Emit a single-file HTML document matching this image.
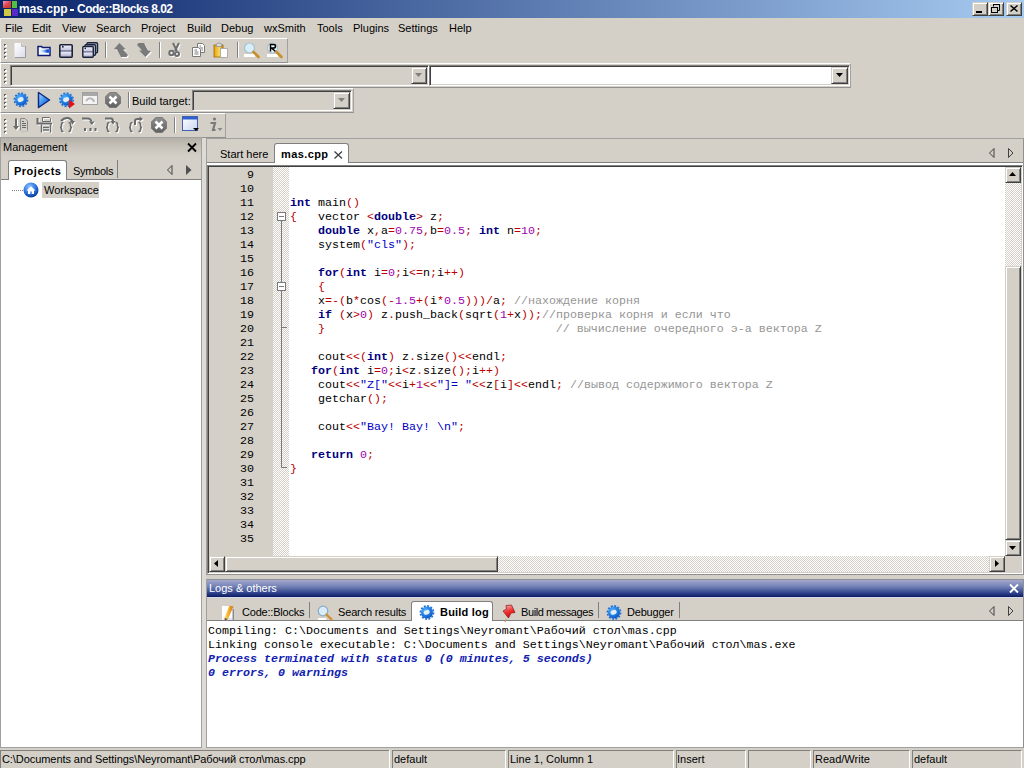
<!DOCTYPE html>
<html><head><meta charset="utf-8">
<style>
*{box-sizing:border-box;margin:0;padding:0}
html,body{width:1024px;height:768px;overflow:hidden;background:#D4D0C8;font-family:"Liberation Sans",sans-serif;font-size:11px;color:#000}
.a{position:absolute}
.t{position:absolute;white-space:pre;line-height:13px}
.mono{font-family:"Liberation Mono",monospace;font-size:11.66px;white-space:pre;position:absolute;line-height:14px}
.btn{position:absolute;background:#D4D0C8;border-top:1px solid #D4D0C8;border-left:1px solid #D4D0C8;border-right:1px solid #404040;border-bottom:1px solid #404040;box-shadow:inset 1px 1px 0 #fff,inset -1px -1px 0 #808080}
.sunk{position:absolute;border-top:1px solid #808080;border-left:1px solid #808080;border-right:1px solid #fff;border-bottom:1px solid #fff;box-shadow:inset 1px 1px 0 #404040, inset -1px -1px 0 #D4D0C8}
.tb{position:absolute;height:25px;border-top:1px solid #fff;border-left:1px solid #fff;border-bottom:1px solid #909090;border-right:1px solid #A0A0A0}
.sep{position:absolute;width:2px;border-left:1px solid #808080;border-right:1px solid #fff}
.checker{background-color:#fff;background-image:linear-gradient(45deg,#D4D0C8 25%,transparent 25%,transparent 75%,#D4D0C8 75%),linear-gradient(45deg,#D4D0C8 25%,transparent 25%,transparent 75%,#D4D0C8 75%);background-size:2px 2px;background-position:0 0,1px 1px}
.k{color:#00007F;font-weight:bold}
.o{color:#B80000}
.n{color:#A000B0}
.s{color:#0000C8}
.c{color:#959595}
svg{position:absolute;overflow:visible}
</style></head><body>

<div class="a" style="left:0px;top:0px;width:1024px;height:18px;background:linear-gradient(to right,#0A246A,#A6CAF0)"></div>
<svg style="left:0;top:0" width="20" height="17">
 <defs><linearGradient id="rdg" x1="0" y1="0" x2="1" y2="1"><stop offset="0" stop-color="#F0A0B0"/><stop offset="0.5" stop-color="#E04050"/><stop offset="1" stop-color="#C04010"/></linearGradient></defs>
 <rect x="3" y="1" width="8" height="7" fill="url(#rdg)"/>
 <rect x="12" y="1" width="5" height="7" fill="#50C040"/>
 <rect x="4" y="9" width="7" height="7" fill="#D0C840"/>
 <rect x="12" y="9" width="6" height="7" fill="#5828C8"/>
</svg>
<div class="btn" style="left:972px;top:2px;width:16px;height:14px"></div>
<div class="a" style="left:976px;top:11px;width:6px;height:2px;background:#000"></div>
<div class="btn" style="left:988px;top:2px;width:16px;height:14px"></div>
<svg style="left:991px;top:4px" width="9" height="9"><path d="M2.5 2.5V0.5H8.5V6.5H6.5" fill="none" stroke="#000" stroke-width="1"/><path d="M2 0H9V1H2z" fill="#000"/><rect x="0.5" y="3.5" width="6" height="5" fill="none" stroke="#000"/><path d="M0 3H7V4H0z" fill="#000"/></svg>
<div class="btn" style="left:1006px;top:2px;width:16px;height:14px"></div>
<svg style="left:1010px;top:5px" width="8" height="7"><path d="M0.5 0.5L7.5 6.5M7.5 0.5L0.5 6.5" stroke="#000" stroke-width="1.5"/></svg>

<div class="t" style="left:19px;top:2px;color:#fff;font-weight:bold;font-size:12px;line-height:15px">mas.cpp</div>
<div class="a" style="left:70px;top:9px;width:4px;height:2px;background:#fff"></div>
<div class="t" style="left:77px;top:2px;color:#fff;font-weight:bold;font-size:12px;letter-spacing:-0.5px;line-height:15px">Code::Blocks 8.02</div>
<div class="t" style="left:5px;top:22px;">File</div>
<div class="t" style="left:32px;top:22px;">Edit</div>
<div class="t" style="left:62px;top:22px;">View</div>
<div class="t" style="left:96px;top:22px;">Search</div>
<div class="t" style="left:141px;top:22px;">Project</div>
<div class="t" style="left:187px;top:22px;">Build</div>
<div class="t" style="left:221px;top:22px;">Debug</div>
<div class="t" style="left:264px;top:22px;">wxSmith</div>
<div class="t" style="left:317px;top:22px;">Tools</div>
<div class="t" style="left:353px;top:22px;">Plugins</div>
<div class="t" style="left:398px;top:22px;">Settings</div>
<div class="t" style="left:449px;top:22px;">Help</div>
<div class="tb" style="left:0;top:38px;width:288px"></div>
<div class="a" style="left:4px;top:44px;width:2px;height:2px;background:#606060"></div>
<div class="a" style="left:5px;top:45px;width:2px;height:2px;background:#fff"></div>
<div class="a" style="left:4px;top:44px;width:2px;height:1px;background:#606060"></div>
<div class="a" style="left:4px;top:45px;width:1px;height:1px;background:#606060"></div>
<div class="a" style="left:4px;top:48px;width:2px;height:2px;background:#606060"></div>
<div class="a" style="left:5px;top:49px;width:2px;height:2px;background:#fff"></div>
<div class="a" style="left:4px;top:48px;width:2px;height:1px;background:#606060"></div>
<div class="a" style="left:4px;top:49px;width:1px;height:1px;background:#606060"></div>
<div class="a" style="left:4px;top:52px;width:2px;height:2px;background:#606060"></div>
<div class="a" style="left:5px;top:53px;width:2px;height:2px;background:#fff"></div>
<div class="a" style="left:4px;top:52px;width:2px;height:1px;background:#606060"></div>
<div class="a" style="left:4px;top:53px;width:1px;height:1px;background:#606060"></div>
<div class="a" style="left:4px;top:56px;width:2px;height:2px;background:#606060"></div>
<div class="a" style="left:5px;top:57px;width:2px;height:2px;background:#fff"></div>
<div class="a" style="left:4px;top:56px;width:2px;height:1px;background:#606060"></div>
<div class="a" style="left:4px;top:57px;width:1px;height:1px;background:#606060"></div>
<div class="tb" style="left:0;top:63px;width:851px"></div>
<div class="a" style="left:4px;top:69px;width:2px;height:2px;background:#606060"></div>
<div class="a" style="left:5px;top:70px;width:2px;height:2px;background:#fff"></div>
<div class="a" style="left:4px;top:69px;width:2px;height:1px;background:#606060"></div>
<div class="a" style="left:4px;top:70px;width:1px;height:1px;background:#606060"></div>
<div class="a" style="left:4px;top:73px;width:2px;height:2px;background:#606060"></div>
<div class="a" style="left:5px;top:74px;width:2px;height:2px;background:#fff"></div>
<div class="a" style="left:4px;top:73px;width:2px;height:1px;background:#606060"></div>
<div class="a" style="left:4px;top:74px;width:1px;height:1px;background:#606060"></div>
<div class="a" style="left:4px;top:77px;width:2px;height:2px;background:#606060"></div>
<div class="a" style="left:5px;top:78px;width:2px;height:2px;background:#fff"></div>
<div class="a" style="left:4px;top:77px;width:2px;height:1px;background:#606060"></div>
<div class="a" style="left:4px;top:78px;width:1px;height:1px;background:#606060"></div>
<div class="a" style="left:4px;top:81px;width:2px;height:2px;background:#606060"></div>
<div class="a" style="left:5px;top:82px;width:2px;height:2px;background:#fff"></div>
<div class="a" style="left:4px;top:81px;width:2px;height:1px;background:#606060"></div>
<div class="a" style="left:4px;top:82px;width:1px;height:1px;background:#606060"></div>
<div class="tb" style="left:0;top:88px;width:354px"></div>
<div class="a" style="left:4px;top:94px;width:2px;height:2px;background:#606060"></div>
<div class="a" style="left:5px;top:95px;width:2px;height:2px;background:#fff"></div>
<div class="a" style="left:4px;top:94px;width:2px;height:1px;background:#606060"></div>
<div class="a" style="left:4px;top:95px;width:1px;height:1px;background:#606060"></div>
<div class="a" style="left:4px;top:98px;width:2px;height:2px;background:#606060"></div>
<div class="a" style="left:5px;top:99px;width:2px;height:2px;background:#fff"></div>
<div class="a" style="left:4px;top:98px;width:2px;height:1px;background:#606060"></div>
<div class="a" style="left:4px;top:99px;width:1px;height:1px;background:#606060"></div>
<div class="a" style="left:4px;top:102px;width:2px;height:2px;background:#606060"></div>
<div class="a" style="left:5px;top:103px;width:2px;height:2px;background:#fff"></div>
<div class="a" style="left:4px;top:102px;width:2px;height:1px;background:#606060"></div>
<div class="a" style="left:4px;top:103px;width:1px;height:1px;background:#606060"></div>
<div class="a" style="left:4px;top:106px;width:2px;height:2px;background:#606060"></div>
<div class="a" style="left:5px;top:107px;width:2px;height:2px;background:#fff"></div>
<div class="a" style="left:4px;top:106px;width:2px;height:1px;background:#606060"></div>
<div class="a" style="left:4px;top:107px;width:1px;height:1px;background:#606060"></div>
<div class="tb" style="left:0;top:113px;width:226px"></div>
<div class="a" style="left:4px;top:119px;width:2px;height:2px;background:#606060"></div>
<div class="a" style="left:5px;top:120px;width:2px;height:2px;background:#fff"></div>
<div class="a" style="left:4px;top:119px;width:2px;height:1px;background:#606060"></div>
<div class="a" style="left:4px;top:120px;width:1px;height:1px;background:#606060"></div>
<div class="a" style="left:4px;top:123px;width:2px;height:2px;background:#606060"></div>
<div class="a" style="left:5px;top:124px;width:2px;height:2px;background:#fff"></div>
<div class="a" style="left:4px;top:123px;width:2px;height:1px;background:#606060"></div>
<div class="a" style="left:4px;top:124px;width:1px;height:1px;background:#606060"></div>
<div class="a" style="left:4px;top:127px;width:2px;height:2px;background:#606060"></div>
<div class="a" style="left:5px;top:128px;width:2px;height:2px;background:#fff"></div>
<div class="a" style="left:4px;top:127px;width:2px;height:1px;background:#606060"></div>
<div class="a" style="left:4px;top:128px;width:1px;height:1px;background:#606060"></div>
<div class="a" style="left:4px;top:131px;width:2px;height:2px;background:#606060"></div>
<div class="a" style="left:5px;top:132px;width:2px;height:2px;background:#fff"></div>
<div class="a" style="left:4px;top:131px;width:2px;height:1px;background:#606060"></div>
<div class="a" style="left:4px;top:132px;width:1px;height:1px;background:#606060"></div>
<!-- ===== Toolbar 1 icons ===== -->
<svg style="left:14px;top:42px" width="13" height="16">
 <defs><linearGradient id="pg" x1="0" y1="0" x2="1" y2="1"><stop offset="0" stop-color="#fff"/><stop offset="1" stop-color="#DCDCEC"/></linearGradient></defs>
 <path d="M0.5 1H8L11.5 4.5V15H0.5z" fill="url(#pg)"/>
 <path d="M11.5 4V15.5H1" fill="none" stroke="#9A9A9A" stroke-width="1"/>
 <path d="M7.5 1V4.5H11.5" fill="#C8C8C8" stroke="#B0B0B0" stroke-width="0.6"/>
</svg>
<svg style="left:37px;top:45px" width="15" height="12">
 <defs><linearGradient id="fg" x1="0" y1="0.5" x2="1" y2="0.5"><stop offset="0" stop-color="#FFFFFF"/><stop offset="0.35" stop-color="#B0D8F8"/><stop offset="0.75" stop-color="#1848D0"/><stop offset="1" stop-color="#3868E0"/></linearGradient></defs>
 <path d="M1 1.5H4.5L5.5 2.5H13V10.5H1z" fill="#F4F8FF" stroke="#101A70" stroke-width="1.5"/>
 <path d="M2 4.5Q7 5 13 4V8Q7 7.5 2 7z" fill="url(#fg)"/>
</svg>
<svg style="left:59px;top:44px" width="15" height="14">
 <defs><linearGradient id="flg" x1="0" y1="0" x2="0" y2="1"><stop offset="0" stop-color="#F4F4FF"/><stop offset="0.4" stop-color="#C8C8E0"/><stop offset="0.5" stop-color="#5A6080"/><stop offset="0.6" stop-color="#E8E8F8"/><stop offset="1" stop-color="#A8A8C8"/></linearGradient></defs>
 <rect x="0.8" y="0.8" width="12.4" height="12.4" rx="1" fill="url(#flg)" stroke="#1A2238" stroke-width="1.6"/>
 <rect x="3" y="2" width="1.6" height="1.6" fill="#1A2238"/>
</svg>
<svg style="left:82px;top:42px" width="17" height="16">
 <rect x="5" y="0.8" width="10.5" height="10" rx="1" fill="#B8BCD8" stroke="#1A2238" stroke-width="1.4"/>
 <rect x="3" y="2.8" width="10.5" height="10.5" rx="1" fill="#C8CCE4" stroke="#1A2238" stroke-width="1.4"/>
 <rect x="0.8" y="4.5" width="10.5" height="10.8" rx="1" fill="url(#flg)" stroke="#1A2238" stroke-width="1.4"/>
 <rect x="2.6" y="5.6" width="1.4" height="1.4" fill="#1A2238"/>
</svg>
<div class="sep" style="left:105px;top:42px;height:16px"></div>
<svg style="left:113px;top:42px" width="17" height="17">
 <path d="M6.5 1L1 7L4 7.5L8 15L13.5 15L15 13L10 7.5L13 7.5z" fill="#fff" transform="translate(1 1)"/>
 <path d="M6.5 1L1 7L4 7.5L8 15L13.5 15L15 13L10 7.5L13 7.5z" fill="#7A7A7A"/>
</svg>
<svg style="left:136px;top:42px" width="17" height="17">
 <path d="M9.5 15L15 9L12 8.5L8 1L2.5 1L1 3L6 8.5L3 8.5z" fill="#fff" transform="translate(1 1)"/>
 <path d="M9.5 15L15 9L12 8.5L8 1L2.5 1L1 3L6 8.5L3 8.5z" fill="#7A7A7A"/>
</svg>
<div class="sep" style="left:159px;top:42px;height:16px"></div>
<svg style="left:168px;top:42px" width="16" height="16">
 <g fill="none" stroke="#fff" stroke-width="2" transform="translate(1 1)">
  <path d="M5 1L9 9M11 1L7 9"/><circle cx="3.5" cy="11" r="2.2"/><circle cx="9" cy="12" r="2"/>
 </g>
 <g fill="none" stroke="#6E6E6E" stroke-width="2">
  <path d="M5 1L9 9M11 1L7 9"/><circle cx="3.5" cy="11" r="2.2"/><circle cx="9" cy="12" r="2"/>
 </g>
</svg>
<svg style="left:192px;top:43px" width="14" height="15">
 <path d="M5.5 0.5H10.5L12.5 2.5V9.5H5.5z" fill="#fff" stroke="#7A7A7A"/>
 <path d="M0.5 4.5H6.5L8.5 6.5V13.5H0.5z" fill="#fff" stroke="#7A7A7A"/>
 <path d="M2.5 7H5M2.5 9H6.5M2.5 11H6.5M7.5 3H9M7.5 5H11M9.5 7H11" stroke="#7A7A7A" stroke-width="1"/>
</svg>
<svg style="left:213px;top:42px" width="16" height="16">
 <defs><linearGradient id="cbg" x1="0" y1="0" x2="1" y2="0"><stop offset="0" stop-color="#E8A010"/><stop offset="0.6" stop-color="#F8D860"/><stop offset="1" stop-color="#C88000"/></linearGradient></defs>
 <rect x="1" y="3" width="9" height="12" fill="url(#cbg)" stroke="#A06800" stroke-width="0.8"/>
 <path d="M3 4.5Q3 0.8 6 0.8Q9 0.8 9 4.5z" fill="#D8D8D8" stroke="#909090" stroke-width="0.8"/>
 <path d="M7.5 6.5H14.5V15.5H7.5z" fill="#fff" stroke="#A0A0A0" stroke-width="0.8"/>
</svg>
<div class="sep" style="left:237px;top:42px;height:16px"></div>
<svg style="left:243px;top:42px" width="18" height="17">
 <path d="M1 12H12V15H1z" fill="#fff"/>
 <circle cx="6.5" cy="6" r="5" fill="#D8EEFA" stroke="#A8C0D0" stroke-width="1.2"/>
 <path d="M10.5 10L15.5 15" stroke="#C89028" stroke-width="2.6" stroke-linecap="round"/>
</svg>
<svg style="left:266px;top:42px" width="18" height="17">
 <path d="M1 12H12V15H1z" fill="#fff"/>
 <circle cx="6.5" cy="6" r="5" fill="#EEF6FC" stroke="#A8C0D0" stroke-width="1.2"/>
 <path d="M4.5 9.5V2.5H7.5Q9.5 2.5 9.5 4.2Q9.5 6 7.5 6H5.5L9.5 9.5" fill="none" stroke="#000" stroke-width="1.5"/>
 <path d="M10.5 10L15.5 15" stroke="#C89028" stroke-width="2.6" stroke-linecap="round"/>
</svg>

<!-- ===== Toolbar 3 icons ===== -->
<svg style="left:13px;top:92px" width="16" height="16">
 <g transform="translate(8 7.8)">
 <defs><radialGradient id="gg1" cx="0.35" cy="0.3" r="0.8"><stop offset="0" stop-color="#50B0FF"/><stop offset="0.6" stop-color="#1C78E0"/><stop offset="1" stop-color="#0C48B0"/></radialGradient></defs><circle cx="0" cy="0" r="6" fill="url(#gg1)"/><circle cx="0" cy="0" r="6.6" fill="none" stroke="#1C70D8" stroke-width="1.6" stroke-dasharray="2 1.45"/><ellipse cx="-0.3" cy="-0.3" rx="3.1" ry="2.3" fill="#E4ECF4" transform="rotate(-20)"/>
 </g>
</svg>
<svg style="left:37px;top:91px" width="15" height="18">
 <defs><linearGradient id="rg" x1="0" y1="0" x2="1" y2="1"><stop offset="0" stop-color="#B8E0FF"/><stop offset="0.5" stop-color="#3C90F0"/><stop offset="1" stop-color="#1060D0"/></linearGradient></defs>
 <path d="M1.5 1.5L12.5 9L1.5 16.5z" fill="url(#rg)" stroke="#0C2A80" stroke-width="1.5" stroke-linejoin="round"/>
</svg>
<svg style="left:59px;top:92px" width="17" height="17">
 <g transform="translate(7.5 7.8)">
 <defs><radialGradient id="gg2" cx="0.35" cy="0.3" r="0.8"><stop offset="0" stop-color="#50B0FF"/><stop offset="0.6" stop-color="#1C78E0"/><stop offset="1" stop-color="#0C48B0"/></radialGradient></defs><circle cx="0" cy="0" r="6" fill="url(#gg2)"/><circle cx="0" cy="0" r="6.6" fill="none" stroke="#1C70D8" stroke-width="1.6" stroke-dasharray="2 1.45"/><ellipse cx="-0.3" cy="-0.3" rx="3.1" ry="2.3" fill="#E4ECF4" transform="rotate(-20)"/>
 </g>
 <path d="M10 7.5L16 12L10 16.5z" fill="#E81010"/>
</svg>
<svg style="left:82px;top:92px" width="16" height="14">
 <rect x="0.5" y="0.5" width="15" height="12" fill="#F4F4F4" stroke="#A0A0A0"/>
 <rect x="1" y="1" width="14" height="3" fill="#A8A8A8"/>
 <path d="M4 9Q7 5 10 7Q12 8 12 10" fill="none" stroke="#B8B8B8" stroke-width="2"/>
</svg>
<svg style="left:105px;top:92px" width="16" height="16">
 <defs><linearGradient id="ag" x1="0" y1="0" x2="0" y2="1"><stop offset="0" stop-color="#909090"/><stop offset="1" stop-color="#606060"/></linearGradient></defs>
 <path d="M4.7 0.5H11.3L15.5 4.7V11.3L11.3 15.5H4.7L0.5 11.3V4.7z" fill="url(#ag)" stroke="#707070" stroke-width="0.8"/>
 <path d="M4.5 4.5L11.5 11.5M11.5 4.5L4.5 11.5" stroke="#fff" stroke-width="2.6"/>
</svg>
<div class="sep" style="left:128px;top:92px;height:16px"></div>

<!-- ===== Toolbar 4 icons (disabled) ===== -->
<svg style="left:13px;top:117px" width="18" height="17"><g transform="translate(1 1)"><path d="M3 1.5V10" fill="none" stroke="#fff" stroke-width="2"/><path d="M0 9H6L3 13z" fill="#fff"/></g><path d="M3 1.5V10" fill="none" stroke="#6A6A6A" stroke-width="2"/><path d="M0 9H6L3 13z" fill="#6A6A6A"/><path d="M7.5 13.5V1.5H12L14.5 4V13.5" fill="none" stroke="#8A8A8A"/><path d="M9 4.5H11M9 6.5H13M9 8.5H13M9 10.5H13" stroke="#6A6A6A"/><path d="M8 14.5H15" stroke="#C0C0C0"/></svg>
<svg style="left:36px;top:117px" width="18" height="17"><g transform="translate(1 1)"><path d="M1.5 1V6.5H16" fill="none" stroke="#fff" stroke-width="2"/><path d="M6.5 0.5H13.5L14.5 1.5V4.5H6.5z" fill="none" stroke="#fff" stroke-width="1"/><path d="M5.5 7.5V15.5M14.5 7.5V15.5M7 10.5H13M7 13H13" fill="none" stroke="#fff" stroke-width="1.4"/></g><path d="M1.5 1V6.5H16" fill="none" stroke="#6A6A6A" stroke-width="2"/><path d="M6.5 0.5H13.5L14.5 1.5V4.5H6.5z" fill="none" stroke="#6A6A6A" stroke-width="1"/><path d="M5.5 7.5V15.5M14.5 7.5V15.5M7 10.5H13M7 13H13" fill="none" stroke="#6A6A6A" stroke-width="1.4"/></svg>
<svg style="left:59px;top:117px" width="18" height="17"><g transform="translate(1 1)"><path d="M2 4Q5 0.5 9 1Q12 1.5 13.5 4.5" fill="none" stroke="#fff" stroke-width="2"/><path d="M11 4H16L13.5 7.5z" fill="#fff"/><path d="M4.5 5.5Q2.5 5.5 2.5 7.5V9Q2.5 10.5 1 10.5Q2.5 10.5 2.5 12V13Q2.5 14.5 4.5 14.5" fill="none" stroke="#fff" stroke-width="1.6"/><path d="M9.5 5.5Q11.5 5.5 11.5 7.5V9Q11.5 10.5 13 10.5Q11.5 10.5 11.5 12V13Q11.5 14.5 9.5 14.5" fill="none" stroke="#fff" stroke-width="1.6"/></g><path d="M2 4Q5 0.5 9 1Q12 1.5 13.5 4.5" fill="none" stroke="#6A6A6A" stroke-width="2"/><path d="M11 4H16L13.5 7.5z" fill="#6A6A6A"/><path d="M4.5 5.5Q2.5 5.5 2.5 7.5V9Q2.5 10.5 1 10.5Q2.5 10.5 2.5 12V13Q2.5 14.5 4.5 14.5" fill="none" stroke="#6A6A6A" stroke-width="1.6"/><path d="M9.5 5.5Q11.5 5.5 11.5 7.5V9Q11.5 10.5 13 10.5Q11.5 10.5 11.5 12V13Q11.5 14.5 9.5 14.5" fill="none" stroke="#6A6A6A" stroke-width="1.6"/></svg>
<svg style="left:82px;top:117px" width="18" height="17"><g transform="translate(1 1)"><path d="M0 1.5H6Q8.5 1.5 9.5 4.5" fill="none" stroke="#fff" stroke-width="2"/><path d="M7 4.5H12.5L10 8z" fill="#fff"/><path d="M2 11H4V14H2zM7.5 11H9.5V14H7.5zM12.5 11H14.5V14H12.5z" fill="#fff"/></g><path d="M0 1.5H6Q8.5 1.5 9.5 4.5" fill="none" stroke="#6A6A6A" stroke-width="2"/><path d="M7 4.5H12.5L10 8z" fill="#6A6A6A"/><path d="M2 11H4V14H2zM7.5 11H9.5V14H7.5zM12.5 11H14.5V14H12.5z" fill="#6A6A6A"/></svg>
<svg style="left:105px;top:117px" width="18" height="17"><g transform="translate(1 1)"><path d="M0 1.5H6Q8 1.5 8 4.5" fill="none" stroke="#fff" stroke-width="2"/><path d="M5.5 4H10.5L8 7.5z" fill="#fff"/><path d="M4.5 5.5Q2.5 5.5 2.5 7.5V9Q2.5 10.5 1 10.5Q2.5 10.5 2.5 12V13Q2.5 14.5 4.5 14.5" fill="none" stroke="#fff" stroke-width="1.6"/><path d="M10.5 5.5Q12.5 5.5 12.5 7.5V9Q12.5 10.5 14 10.5Q12.5 10.5 12.5 12V13Q12.5 14.5 10.5 14.5" fill="none" stroke="#fff" stroke-width="1.6"/></g><path d="M0 1.5H6Q8 1.5 8 4.5" fill="none" stroke="#6A6A6A" stroke-width="2"/><path d="M5.5 4H10.5L8 7.5z" fill="#6A6A6A"/><path d="M4.5 5.5Q2.5 5.5 2.5 7.5V9Q2.5 10.5 1 10.5Q2.5 10.5 2.5 12V13Q2.5 14.5 4.5 14.5" fill="none" stroke="#6A6A6A" stroke-width="1.6"/><path d="M10.5 5.5Q12.5 5.5 12.5 7.5V9Q12.5 10.5 14 10.5Q12.5 10.5 12.5 12V13Q12.5 14.5 10.5 14.5" fill="none" stroke="#6A6A6A" stroke-width="1.6"/></svg>
<svg style="left:128px;top:117px" width="18" height="17"><g transform="translate(1 1)"><path d="M7 8V4Q7 2 9.5 2H12" fill="none" stroke="#fff" stroke-width="2"/><path d="M11.5 -0.5V4.5L15 2z" fill="#fff"/><path d="M4.5 5.5Q2.5 5.5 2.5 7.5V9Q2.5 10.5 1 10.5Q2.5 10.5 2.5 12V13Q2.5 14.5 4.5 14.5" fill="none" stroke="#fff" stroke-width="1.6"/><path d="M10.5 5.5Q12.5 5.5 12.5 7.5V9Q12.5 10.5 14 10.5Q12.5 10.5 12.5 12V13Q12.5 14.5 10.5 14.5" fill="none" stroke="#fff" stroke-width="1.6"/></g><path d="M7 8V4Q7 2 9.5 2H12" fill="none" stroke="#6A6A6A" stroke-width="2"/><path d="M11.5 -0.5V4.5L15 2z" fill="#6A6A6A"/><path d="M4.5 5.5Q2.5 5.5 2.5 7.5V9Q2.5 10.5 1 10.5Q2.5 10.5 2.5 12V13Q2.5 14.5 4.5 14.5" fill="none" stroke="#6A6A6A" stroke-width="1.6"/><path d="M10.5 5.5Q12.5 5.5 12.5 7.5V9Q12.5 10.5 14 10.5Q12.5 10.5 12.5 12V13Q12.5 14.5 10.5 14.5" fill="none" stroke="#6A6A6A" stroke-width="1.6"/></svg>
<svg style="left:151px;top:117px" width="16" height="16">
 <path d="M4.7 0.5H11.3L15.5 4.7V11.3L11.3 15.5H4.7L0.5 11.3V4.7z" fill="url(#ag)" stroke="#707070" stroke-width="0.8"/>
 <path d="M4.5 4.5L11.5 11.5M11.5 4.5L4.5 11.5" stroke="#fff" stroke-width="2.6"/>
</svg>
<div class="sep" style="left:174px;top:117px;height:16px"></div>
<svg style="left:182px;top:116px" width="18" height="17">
 <defs><linearGradient id="wg" x1="0" y1="0" x2="1" y2="1"><stop offset="0" stop-color="#fff"/><stop offset="1" stop-color="#C8D4F0"/></linearGradient></defs>
 <rect x="0.5" y="0.5" width="15" height="14" fill="url(#wg)" stroke="#4060B0"/>
 <rect x="1" y="1" width="14" height="2.5" fill="#3060D0"/>
 <path d="M11 12H17L14 15z" fill="#000"/>
</svg>
<svg style="left:207px;top:117px" width="17" height="16">
 <circle cx="7.5" cy="2" r="1.6" fill="#7A7A7A"/>
 <path d="M3.5 6H8L6 13H8.5" fill="none" stroke="#7A7A7A" stroke-width="2.2"/>
 <path d="M10.5 11H15.5L13 14z" fill="#8A8A8A"/>
</svg>

<div class="sunk" style="left:10px;top:65px;width:419px;height:21px;background:#D4D0C8"></div>
<div class="btn" style="left:411px;top:67px;width:16px;height:17px"></div>
<svg style="left:415px;top:73px" width="8" height="4"><path d="M0 0h7l-3.5 4z" fill="#808080"/></svg>
<div class="sunk" style="left:429px;top:65px;width:421px;height:21px;background:#fff"></div>
<div class="btn" style="left:831px;top:67px;width:17px;height:17px"></div>
<svg style="left:836px;top:73px" width="8" height="4"><path d="M0 0h7l-3.5 4z" fill="#000"/></svg>
<div class="t" style="left:132px;top:95px;">Build target:</div>
<div class="sunk" style="left:192px;top:90px;width:160px;height:21px;background:#D4D0C8"></div>
<div class="btn" style="left:333px;top:92px;width:17px;height:17px"></div>
<svg style="left:338px;top:98px" width="8" height="4"><path d="M0 0h7l-3.5 4z" fill="#808080"/></svg>
<!-- ===== Management panel ===== -->
<div class="a" style="left:0;top:137px;width:202px;height:611px;background:#fff;border-left:1px solid #A0A0A0;border-right:1px solid #A0A0A0;border-bottom:1px solid #A0A0A0;border-top:1px solid #A0A0A0"></div>
<div class="a" style="left:1px;top:138px;width:200px;height:41px;background:linear-gradient(#B4B0A8 0px,#C6C2BA 9px,#D2CEC6 17px,#D4D0C8 20px,#D4D0C8)"></div>
<div class="t" style="left:3px;top:141px">Management</div>
<svg style="left:187px;top:143px" width="10" height="9"><path d="M1 0.5L9 8.5M9 0.5L1 8.5" stroke="#000" stroke-width="1.8"/></svg>
<!-- tab row line -->
<div class="a" style="left:1px;top:179px;width:200px;height:1px;background:#808080"></div>
<!-- Projects tab -->
<div class="a" style="left:8px;top:160px;width:59px;height:20px;background:#fff;border:1px solid #808080;border-bottom:none;border-radius:3px 3px 0 0"></div>
<div class="t" style="left:14px;top:165px;font-weight:bold;letter-spacing:0.5px">Projects</div>
<div class="t" style="left:73px;top:165px;letter-spacing:-0.3px">Symbols</div>
<div class="a" style="left:117px;top:160px;width:1px;height:18px;background:#808080"></div>
<svg style="left:167px;top:165px" width="6" height="10"><path d="M5 0.5V9.5L0.5 5z" fill="none" stroke="#404040" stroke-width="1"/></svg>
<svg style="left:186px;top:165px" width="6" height="10"><path d="M0 0V10L5.5 5z" fill="#505050"/></svg>
<!-- tree -->
<svg style="left:12px;top:190px" width="11" height="1"><path d="M0 0.5H11" stroke="#808080" stroke-dasharray="1 1"/></svg>
<svg style="left:23px;top:182px" width="16" height="16">
 <defs><radialGradient id="wsg" cx="0.4" cy="0.3" r="0.7"><stop offset="0" stop-color="#8EC8FF"/><stop offset="0.6" stop-color="#2E74E0"/><stop offset="1" stop-color="#0A3C9C"/></radialGradient></defs>
 <circle cx="8" cy="8" r="7.5" fill="url(#wsg)"/>
 <path d="M3.5 8.5L8 4.2L12.5 8.5H11V12H5V8.5z" fill="#fff"/>
 <rect x="7" y="9.5" width="2" height="2.5" fill="#6AA0E8"/>
</svg>
<div class="a" style="left:42px;top:182px;width:57px;height:16px;background:#D4D0C8"></div>
<div class="t" style="left:44px;top:184px">Workspace</div>

<!-- sash -->
<div class="a" style="left:202px;top:138px;width:4px;height:610px;background:#DEDBD5"></div>

<!-- ===== Editor notebook ===== -->
<div class="a" style="left:206px;top:138px;width:818px;height:437px;background:#D4D0C8;border-left:1px solid #A0A0A0;border-top:1px solid #A0A0A0;border-right:1px solid #909090;border-bottom:1px solid #909090"></div>
<div class="a" style="left:207px;top:162px;width:816px;height:1px;background:#808080"></div>
<div class="a" style="left:207px;top:163px;width:816px;height:2px;background:#fff"></div>
<!-- Start here tab (inactive) -->
<div class="t" style="left:220px;top:148px">Start here</div>
<!-- mas.cpp tab active -->
<div class="a" style="left:274px;top:143px;width:75px;height:20px;background:#fff;border:1px solid #808080;border-bottom:none;border-radius:3px 3px 0 0"></div>
<div class="a" style="left:275px;top:162px;width:73px;height:1px;background:#fff"></div>
<div class="t" style="left:281px;top:148px;font-weight:bold;letter-spacing:0.4px">mas.cpp</div>
<svg style="left:334px;top:151px" width="9" height="8"><path d="M0.5 0.5L8 7.5M8 0.5L0.5 7.5" stroke="#404040" stroke-width="1.3"/></svg>
<svg style="left:989px;top:148px" width="6" height="10"><path d="M5 0.5V9.5L0.5 5z" fill="none" stroke="#404040" stroke-width="1"/></svg>
<svg style="left:1008px;top:148px" width="6" height="10"><path d="M0.5 0.5V9.5L5 5z" fill="none" stroke="#404040" stroke-width="1"/></svg>

<!-- editor client -->
<div class="a" style="left:207px;top:165px;width:816px;height:409px;border-top:1px solid #808080;border-left:1px solid #808080;border-right:1px solid #fff;border-bottom:1px solid #fff;box-shadow:inset 1px 1px 0 #404040,inset -1px -1px 0 #D4D0C8;background:#fff"></div>
<div class="a" style="left:209px;top:167px;width:64px;height:389px;background:#D4D0C8"></div>
<div class="a checker" style="left:273px;top:167px;width:16px;height:389px"></div>
<!-- fold markers -->
<svg style="left:277px;top:212px" width="12" height="260">
 <path d="M4.5 9V255.5H10" fill="none" stroke="#7A7A7A"/>
 <path d="M5 115.5H10" stroke="#7A7A7A"/>
 <rect x="0.5" y="0.5" width="8" height="8" fill="#fff" stroke="#7A7A7A"/>
 <path d="M2 4.5H7" stroke="#7A7A7A"/>
 <rect x="0.5" y="70.5" width="8" height="8" fill="#fff" stroke="#7A7A7A"/>
 <path d="M2 74.5H7" stroke="#7A7A7A"/>
</svg>
<!-- vscroll -->
<div class="a checker" style="left:1005px;top:167px;width:16px;height:389px"></div>
<div class="btn" style="left:1005px;top:167px;width:16px;height:16px"></div>
<svg style="left:1009px;top:172px" width="8" height="4"><path d="M3.5 0L7 4H0z" fill="#000"/></svg>
<div class="btn" style="left:1005px;top:266px;width:16px;height:274px"></div>
<div class="btn" style="left:1005px;top:540px;width:16px;height:16px"></div>
<svg style="left:1009px;top:546px" width="8" height="4"><path d="M0 0H7L3.5 4z" fill="#000"/></svg>
<!-- hscroll -->
<div class="a checker" style="left:209px;top:556px;width:796px;height:16px"></div>
<div class="btn" style="left:209px;top:556px;width:16px;height:16px"></div>
<svg style="left:214px;top:560px" width="4" height="8"><path d="M4 0V7L0 3.5z" fill="#000"/></svg>
<div class="btn" style="left:225px;top:556px;width:273px;height:16px"></div>
<div class="btn" style="left:989px;top:556px;width:16px;height:16px"></div>
<svg style="left:995px;top:560px" width="4" height="8"><path d="M0 0V7L4 3.5z" fill="#000"/></svg>
<div class="a" style="left:1005px;top:556px;width:16px;height:16px;background:#D4D0C8"></div>

<div class="mono" style="left:290px;top:168px">

<span class="k">int</span> main<span class="o">()</span>
<span class="o">{</span>   vector <span class="o">&lt;</span><span class="k">double</span><span class="o">&gt;</span> z<span class="o">;</span>
    <span class="k">double</span> x<span class="o">,</span>a<span class="o">=</span><span class="n">0.75</span><span class="o">,</span>b<span class="o">=</span><span class="n">0.5</span><span class="o">;</span> <span class="k">int</span> n<span class="o">=</span><span class="n">10</span><span class="o">;</span>
    system<span class="o">(</span><span class="s">&quot;cls&quot;</span><span class="o">);</span>

    <span class="k">for</span><span class="o">(</span><span class="k">int</span> i<span class="o">=</span><span class="n">0</span><span class="o">;</span>i<span class="o">&lt;=</span>n<span class="o">;</span>i<span class="o">++)</span>
    <span class="o">{</span>
    x<span class="o">=-(</span>b<span class="o">*</span>cos<span class="o">(-</span><span class="n">1.5</span><span class="o">+(</span>i<span class="o">*</span><span class="n">0.5</span><span class="o">)))/</span>a<span class="o">;</span> <span class="c">//нахождение корня</span>
    <span class="k">if</span> <span class="o">(</span>x<span class="o">&gt;</span><span class="n">0</span><span class="o">)</span> z<span class="o">.</span>push_back<span class="o">(</span>sqrt<span class="o">(</span><span class="n">1</span><span class="o">+</span>x<span class="o">));</span><span class="c">//проверка корня и если что</span>
    <span class="o">}</span>                                 <span class="c">// вычисление очередного э-а вектора Z</span>

    cout<span class="o">&lt;&lt;(</span><span class="k">int</span><span class="o">)</span> z<span class="o">.</span>size<span class="o">()&lt;&lt;</span>endl<span class="o">;</span>
   <span class="k">for</span><span class="o">(</span><span class="k">int</span> i<span class="o">=</span><span class="n">0</span><span class="o">;</span>i<span class="o">&lt;</span>z<span class="o">.</span>size<span class="o">();</span>i<span class="o">++)</span>
    cout<span class="o">&lt;&lt;</span><span class="s">&quot;Z[&quot;</span><span class="o">&lt;&lt;</span>i<span class="o">+</span><span class="n">1</span><span class="o">&lt;&lt;</span><span class="s">&quot;]= &quot;</span><span class="o">&lt;&lt;</span>z<span class="o">[</span>i<span class="o">]&lt;&lt;</span>endl<span class="o">;</span> <span class="c">//вывод содержимого вектора Z</span>
    getchar<span class="o">();</span>

    cout<span class="o">&lt;&lt;</span><span class="s">&quot;Bay! Bay! \n&quot;</span><span class="o">;</span>

   <span class="k">return</span> <span class="n">0</span><span class="o">;</span>
<span class="o">}</span>




</div>
<div class="mono" style="left:240px;top:168px"> 9
10
11
12
13
14
15
16
17
18
19
20
21
22
23
24
25
26
27
28
29
30
31
32
33
34
35</div>

<!-- ===== Logs panel ===== -->
<div class="a" style="left:206px;top:579px;width:818px;height:169px;background:#fff;border-left:1px solid #A0A0A0;border-right:1px solid #909090;border-bottom:1px solid #A0A0A0"></div>
<div class="a" style="left:207px;top:579px;width:816px;height:1px;background:#909098"></div>
<div class="a" style="left:207px;top:580px;width:816px;height:17px;background:linear-gradient(#A4A8CC,#7080B4 40%,#2A3C88 80%,#0C1C60)"></div>
<div class="a" style="left:207px;top:597px;width:816px;height:1px;background:#D8D8EC"></div>
<div class="t" style="left:209px;top:582px;color:#fff">Logs &amp; others</div>
<svg style="left:1009px;top:584px" width="10" height="9"><path d="M1 0.5L9 8.5M9 0.5L1 8.5" stroke="#fff" stroke-width="1.8"/></svg>
<div class="a" style="left:207px;top:598px;width:816px;height:22px;background:#D4D0C8"></div>
<div class="a" style="left:207px;top:620px;width:816px;height:1px;background:#808080"></div>
<!-- tabs -->
<svg style="left:222px;top:604px" width="13" height="17">
 <defs><linearGradient id="pcg" x1="0" y1="0" x2="1" y2="0"><stop offset="0" stop-color="#F8E060"/><stop offset="0.6" stop-color="#F0A020"/><stop offset="1" stop-color="#C07010"/></linearGradient></defs>
 <rect x="0" y="2" width="11" height="14" fill="#fff"/>
 <rect x="10.5" y="5" width="1.5" height="11" fill="#8A8A9A"/>
 <path d="M1.5 14H10V16H1.5z" fill="#DDE4F4"/>
 <path d="M7.5 1.5L11.5 2.5L6 15L2.5 14z" fill="url(#pcg)"/>
 <path d="M2.5 14L6 15L3 16.5z" fill="#704020"/>
</svg>
<div class="t" style="left:242px;top:606px;letter-spacing:-0.2px">Code::Blocks</div>
<div class="a" style="left:309px;top:602px;width:1px;height:16px;background:#808080"></div>
<svg style="left:317px;top:605px" width="16" height="16">
 <circle cx="6" cy="6" r="4.8" fill="#D8ECFA" stroke="#8AA8C8" stroke-width="1.2"/>
 <path d="M9.5 9.5L14.5 14.5" stroke="#D09030" stroke-width="2.4" stroke-linecap="round"/>
 <path d="M1 13H9V15H1z" fill="#fff"/>
</svg>
<div class="t" style="left:338px;top:606px;letter-spacing:-0.15px">Search results</div>
<div class="a" style="left:411px;top:601px;width:82px;height:20px;background:#fff;border:1px solid #808080;border-bottom:none;border-radius:3px 3px 0 0"></div>
<div class="a" style="left:412px;top:620px;width:80px;height:1px;background:#fff"></div>
<svg style="left:419px;top:605px" width="16" height="16">
 <g transform="translate(8 7.5)">
 <defs><radialGradient id="gg3" cx="0.35" cy="0.3" r="0.8"><stop offset="0" stop-color="#50B0FF"/><stop offset="0.6" stop-color="#1C78E0"/><stop offset="1" stop-color="#0C48B0"/></radialGradient></defs><circle cx="0" cy="0" r="6" fill="url(#gg3)"/><circle cx="0" cy="0" r="6.6" fill="none" stroke="#1C70D8" stroke-width="1.6" stroke-dasharray="2 1.45"/><ellipse cx="-0.3" cy="-0.3" rx="3.1" ry="2.3" fill="#E4ECF4" transform="rotate(-20)"/>
 </g>
</svg>
<div class="t" style="left:440px;top:606px;font-weight:bold;letter-spacing:0.2px">Build log</div>
<svg style="left:500px;top:603px" width="17" height="19">
 <defs><linearGradient id="ping" x1="0.3" y1="0" x2="0.6" y2="1"><stop offset="0" stop-color="#F8A0A8"/><stop offset="0.5" stop-color="#F03030"/><stop offset="1" stop-color="#D00808"/></linearGradient></defs>
 <path d="M6.5 16L5 19" stroke="#B0A070" stroke-width="1.2"/>
 <path d="M6 2.5L11.5 2L15 9.5L11 10L8.5 15L3 8L6.5 6z" fill="url(#ping)" stroke="#901010" stroke-width="0.7"/>
</svg>
<div class="t" style="left:521px;top:606px;letter-spacing:-0.4px">Build messages</div>
<div class="a" style="left:598px;top:602px;width:1px;height:16px;background:#808080"></div>
<svg style="left:606px;top:605px" width="16" height="16">
 <g transform="translate(8 7.5)">
 <defs><radialGradient id="gg4" cx="0.35" cy="0.3" r="0.8"><stop offset="0" stop-color="#50B0FF"/><stop offset="0.6" stop-color="#1C78E0"/><stop offset="1" stop-color="#0C48B0"/></radialGradient></defs><circle cx="0" cy="0" r="6" fill="url(#gg4)"/><circle cx="0" cy="0" r="6.6" fill="none" stroke="#1C70D8" stroke-width="1.6" stroke-dasharray="2 1.45"/><ellipse cx="-0.3" cy="-0.3" rx="3.1" ry="2.3" fill="#E4ECF4" transform="rotate(-20)"/>
 </g>
</svg>
<div class="t" style="left:627px;top:606px;letter-spacing:-0.2px">Debugger</div>
<div class="a" style="left:679px;top:602px;width:1px;height:16px;background:#808080"></div>
<svg style="left:989px;top:606px" width="6" height="10"><path d="M5 0.5V9.5L0.5 5z" fill="none" stroke="#404040" stroke-width="1"/></svg>
<svg style="left:1008px;top:606px" width="6" height="10"><path d="M0.5 0.5V9.5L5 5z" fill="none" stroke="#404040" stroke-width="1"/></svg>
<!-- log text -->
<div class="mono" style="left:208px;top:624px">Compiling: C:\Documents and Settings\Neyromant\Рабочий стол\mas.cpp
Linking console executable: C:\Documents and Settings\Neyromant\Рабочий стол\mas.exe
<span style="color:#1020B0;font-weight:bold;font-style:italic">Process terminated with status 0 (0 minutes, 5 seconds)</span>
<span style="color:#1020B0;font-weight:bold;font-style:italic">0 errors, 0 warnings</span></div>

<!-- ===== Status bar ===== -->
<div class="a" style="left:0;top:750px;width:390px;height:18px;border-top:1px solid #808080;border-left:1px solid #808080"></div>
<div class="a" style="left:389px;top:750px;width:1px;height:18px;background:#fff"></div>
<div class="a" style="left:392px;top:750px;width:114px;height:18px;border-top:1px solid #808080;border-left:1px solid #808080;border-right:1px solid #fff"></div>
<div class="a" style="left:508px;top:750px;width:166px;height:18px;border-top:1px solid #808080;border-left:1px solid #808080;border-right:1px solid #fff"></div>
<div class="a" style="left:676px;top:750px;width:70px;height:18px;border-top:1px solid #808080;border-left:1px solid #808080;border-right:1px solid #fff"></div>
<div class="a" style="left:748px;top:750px;width:63px;height:18px;border-top:1px solid #808080;border-left:1px solid #808080;border-right:1px solid #fff"></div>
<div class="a" style="left:813px;top:750px;width:97px;height:18px;border-top:1px solid #808080;border-left:1px solid #808080;border-right:1px solid #fff"></div>
<div class="a" style="left:912px;top:750px;width:110px;height:18px;border-top:1px solid #808080;border-left:1px solid #808080;border-right:1px solid #fff"></div>
<div class="t" style="left:2px;top:753px;letter-spacing:-0.07px">C:\Documents and Settings\Neyromant\Рабочий стол\mas.cpp</div>
<div class="t" style="left:394px;top:753px">default</div>
<div class="t" style="left:510px;top:753px">Line 1, Column 1</div>
<div class="t" style="left:677px;top:753px">Insert</div>
<div class="t" style="left:815px;top:753px">Read/Write</div>
<div class="t" style="left:914px;top:753px">default</div>

</body></html>
